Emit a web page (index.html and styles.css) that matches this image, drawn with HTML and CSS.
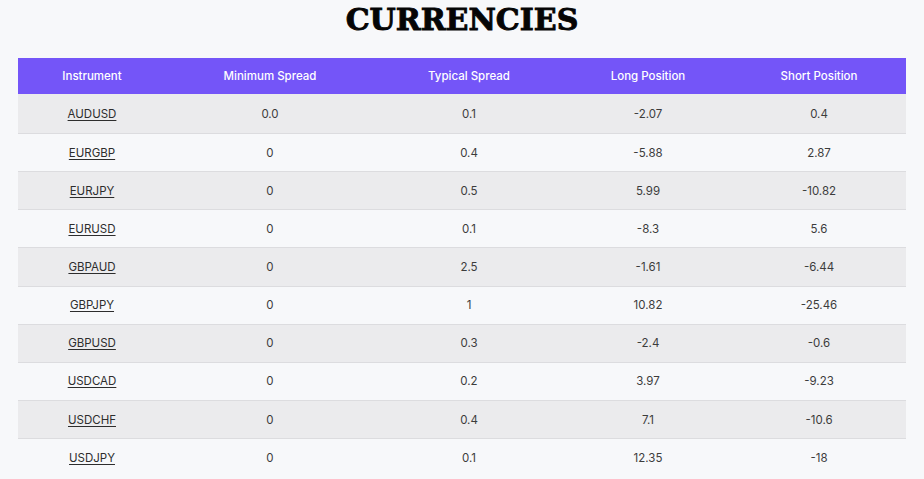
FILE: index.html
```html
<!DOCTYPE html>
<html lang="en">
<head>
<meta charset="utf-8">
<title>Currencies</title>
<link rel="stylesheet" href="styles.css">
</head>
<body>
<main class="page">
  <h1 class="title">CURRENCIES</h1>
  <table class="rates">
    <colgroup>
      <col class="c1"><col class="c2"><col class="c3"><col class="c4"><col class="c5">
    </colgroup>
    <thead>
      <tr><th>Instrument</th><th>Minimum Spread</th><th>Typical Spread</th><th>Long Position</th><th>Short Position</th></tr>
    </thead>
    <tbody>
      <tr><td><a href="#">AUDUSD</a></td><td>0.0</td><td>0.1</td><td>-2.07</td><td>0.4</td></tr>
      <tr><td><a href="#">EURGBP</a></td><td>0</td><td>0.4</td><td>-5.88</td><td>2.87</td></tr>
      <tr><td><a href="#">EURJPY</a></td><td>0</td><td>0.5</td><td>5.99</td><td>-10.82</td></tr>
      <tr><td><a href="#">EURUSD</a></td><td>0</td><td>0.1</td><td>-8.3</td><td>5.6</td></tr>
      <tr><td><a href="#">GBPAUD</a></td><td>0</td><td>2.5</td><td>-1.61</td><td>-6.44</td></tr>
      <tr><td><a href="#">GBPJPY</a></td><td>0</td><td>1</td><td>10.82</td><td>-25.46</td></tr>
      <tr><td><a href="#">GBPUSD</a></td><td>0</td><td>0.3</td><td>-2.4</td><td>-0.6</td></tr>
      <tr><td><a href="#">USDCAD</a></td><td>0</td><td>0.2</td><td>3.97</td><td>-9.23</td></tr>
      <tr><td><a href="#">USDCHF</a></td><td>0</td><td>0.4</td><td>7.1</td><td>-10.6</td></tr>
      <tr><td><a href="#">USDJPY</a></td><td>0</td><td>0.1</td><td>12.35</td><td>-18</td></tr>
    </tbody>
  </table>
</main>
</body>
</html>
```

FILE: styles.css
```css
html, body {
  margin: 0;
  padding: 0;
  background: #f7f8fa;
}
.page {
  padding: 0 18px;
  font-family: "Inter", "Open Sans", sans-serif;
}
.title {
  margin: 0;
  height: 58px;
  display: flex;
  align-items: center;
  justify-content: center;
  padding-bottom: 18px;
  box-sizing: border-box;
  font-family: "DejaVu Serif", "Liberation Serif", serif;
  font-weight: 900;
  font-size: 30px;
  letter-spacing: 0;
  color: #050505;
  line-height: 1;
  -webkit-text-stroke: 0.9px #050505;
}
.rates {
  width: 888px;
  border-collapse: collapse;
  table-layout: fixed;
  font-size: 11.5px;
  color: #3c3c3c;
}
.c1 { width: 148px; }
.c2 { width: 208px; }
.c3 { width: 190px; }
.c4 { width: 168px; }
.c5 { width: 174px; }
.rates th {
  background: #7455f8;
  color: #ffffff;
  font-weight: 500;
  height: 36px;
  padding: 0;
  text-align: center;
}
.rates td {
  height: 37.15px;
  padding: 0;
  text-align: center;
  border-top: 1px solid #dcdcdf;
}
.rates tbody tr:first-child td {
  border-top: none;
  height: 39px;
}
.rates tbody tr:nth-child(odd) td {
  background: #ebebed;
}
.rates a {
  color: #2d2d2d;
  text-decoration: underline;
  text-underline-offset: 2px;
}
```
